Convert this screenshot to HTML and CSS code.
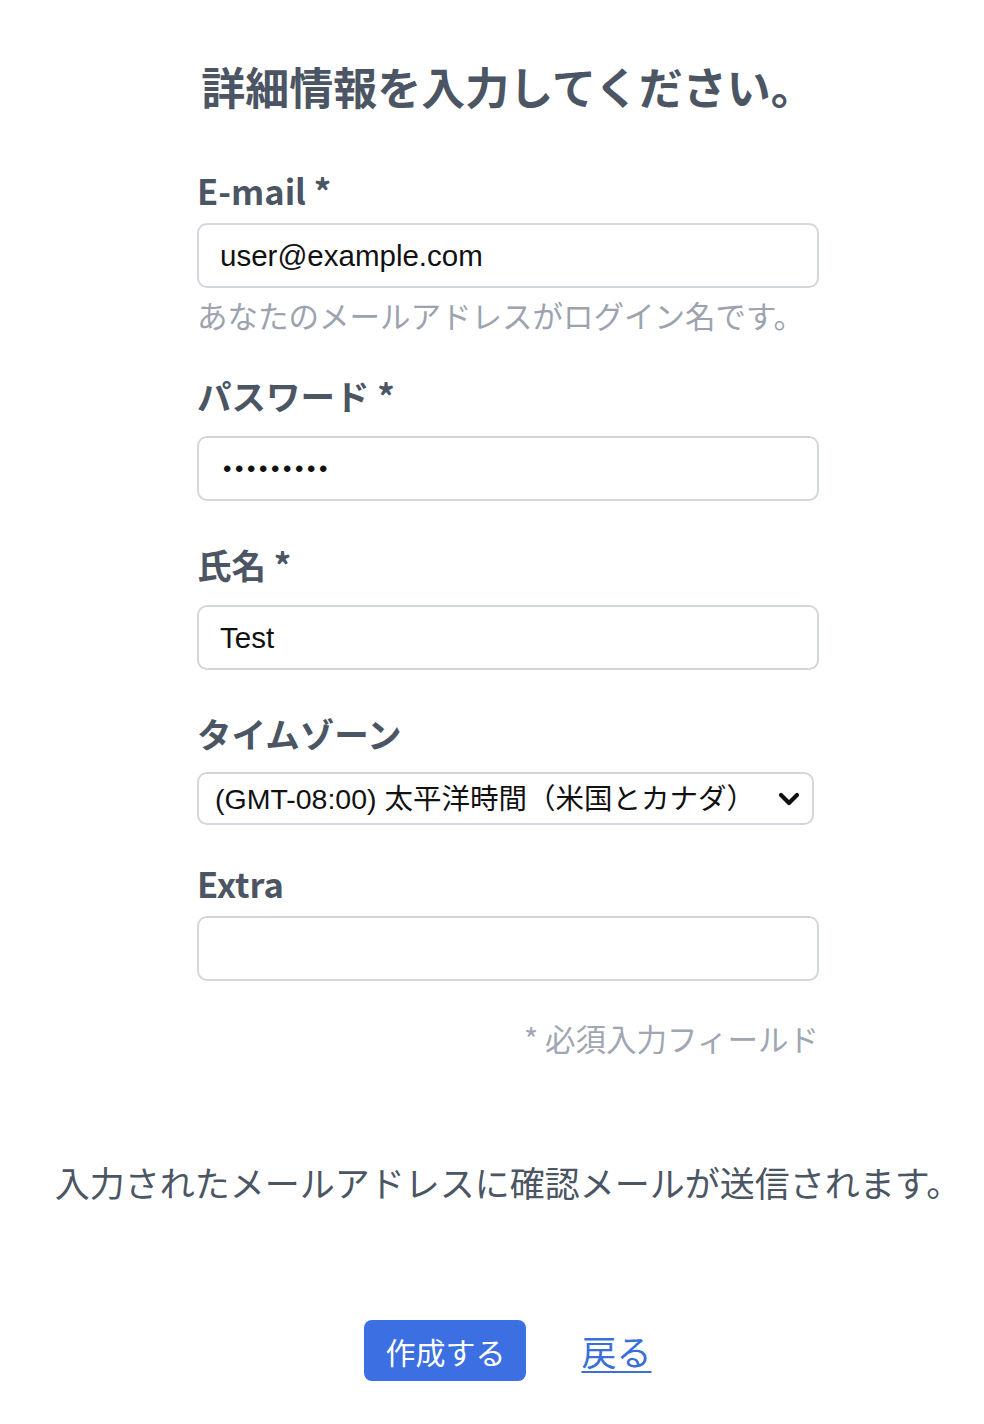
FILE: index.html
```html
<!DOCTYPE html>
<html lang="ja">
<head>
<meta charset="utf-8">
<title>詳細情報</title>
<link rel="stylesheet" href="styles.css">
</head>
<body>
<main class="page">
  <h1 class="title">詳細情報を入力してください。</h1>
  <form class="form">
    <div class="field">
      <label class="label label-latin">E-mail *</label>
      <input class="input" type="text" value="user@example.com">
      <p class="hint">あなたのメールアドレスがログイン名です。</p>
    </div>
    <div class="field">
      <label class="label">パスワード *</label>
      <input class="input input-password" type="password" value="password1">
    </div>
    <div class="field">
      <label class="label">氏名 *</label>
      <input class="input" type="text" value="Test">
    </div>
    <div class="field">
      <label class="label label-tight">タイムゾーン</label>
      <div class="select-wrap">
        <select class="select">
          <option>(GMT-08:00) 太平洋時間（米国とカナダ）</option>
        </select>
        <svg class="chevron" width="22" height="14" viewBox="0 0 22 14" aria-hidden="true">
          <path d="M3 3 L11 11 L19 3" fill="none" stroke="#111" stroke-width="4.2" stroke-linecap="round" stroke-linejoin="round"/>
        </svg>
      </div>
    </div>
    <div class="field">
      <label class="label label-latin">Extra</label>
      <input class="input" type="text" value="">
    </div>
    <p class="req-note">* 必須入力フィールド</p>
  </form>
  <p class="notice">入力されたメールアドレスに確認メールが送信されます。</p>
  <div class="actions">
    <button class="btn" type="button">作成する</button>
    <a class="link" href="#">戻る</a>
  </div>
</main>
</body>
</html>
```

FILE: styles.css
```css
* { box-sizing: border-box; }

html, body {
  margin: 0;
  background: #ffffff;
}

body {
  font-family: "Noto Sans CJK JP", "Noto Sans", sans-serif;
  color: #4b5563;
}

.page {
  padding: 56px 0 40px 32px;
}

.title {
  margin: 0;
  font-size: 44px;
  line-height: 60px;
  font-weight: 700;
  text-align: center;
  color: #4b5563;
}

.form {
  width: 622px;
  margin: 55px auto 0;
}

.field + .field {
  margin-top: 39px;
}

.label {
  display: block;
  font-size: 34.5px;
  line-height: 48px;
  font-weight: 700;
  color: #4b5563;
  margin-bottom: 17px;
}

.label-latin {
  margin-top: -5px;
  margin-bottom: 9px;
}

.label-tight {
  margin-bottom: 15px;
}

.input {
  display: block;
  width: 100%;
  height: 65px;
  border: 2px solid #d3d6dc;
  border-radius: 10px;
  padding: 0 21px;
  font-family: "Liberation Sans", "Noto Sans CJK JP", sans-serif;
  font-size: 29.5px;
  color: #111111;
  background: #ffffff;
  outline: none;
}

.input-password {
  font-size: 24px;
  letter-spacing: 3.6px;
  padding-left: 24px;
}

.hint {
  margin: 5px 0 -5px;
  font-size: 30.5px;
  line-height: 44px;
  color: #9ca3af;
}

.select-wrap {
  position: relative;
  width: 617px;
}

.select {
  display: block;
  width: 100%;
  height: 53px;
  border: 2px solid #d3d6dc;
  border-radius: 10px;
  padding: 0 50px 0 16px;
  font-family: "Liberation Sans", "Noto Sans CJK JP", sans-serif;
  font-size: 28.5px;
  color: #111111;
  background: #ffffff;
  -webkit-appearance: none;
  appearance: none;
  outline: none;
}

.chevron {
  position: absolute;
  right: 14px;
  top: 20px;
}

.req-note {
  margin: 35px 0 0;
  text-align: right;
  font-size: 30.5px;
  line-height: 44px;
  color: #a0a6b2;
}

.notice {
  margin: 96px 0 0;
  text-align: center;
  font-size: 35px;
  line-height: 52px;
  color: #4b5563;
}

.actions {
  margin-top: 112px;
  display: flex;
  justify-content: center;
  align-items: center;
  gap: 55px;
}

.btn {
  width: 162px;
  height: 61px;
  border: none;
  border-radius: 8px;
  background: #3b6fe2;
  color: #ffffff;
  font-family: "Noto Sans CJK JP", sans-serif;
  font-size: 30px;
  padding: 0;
}

.link {
  font-size: 35px;
  color: #3a6fd9;
  text-decoration: underline;
  text-underline-offset: 5px;
  text-decoration-thickness: 2px;
}
```
